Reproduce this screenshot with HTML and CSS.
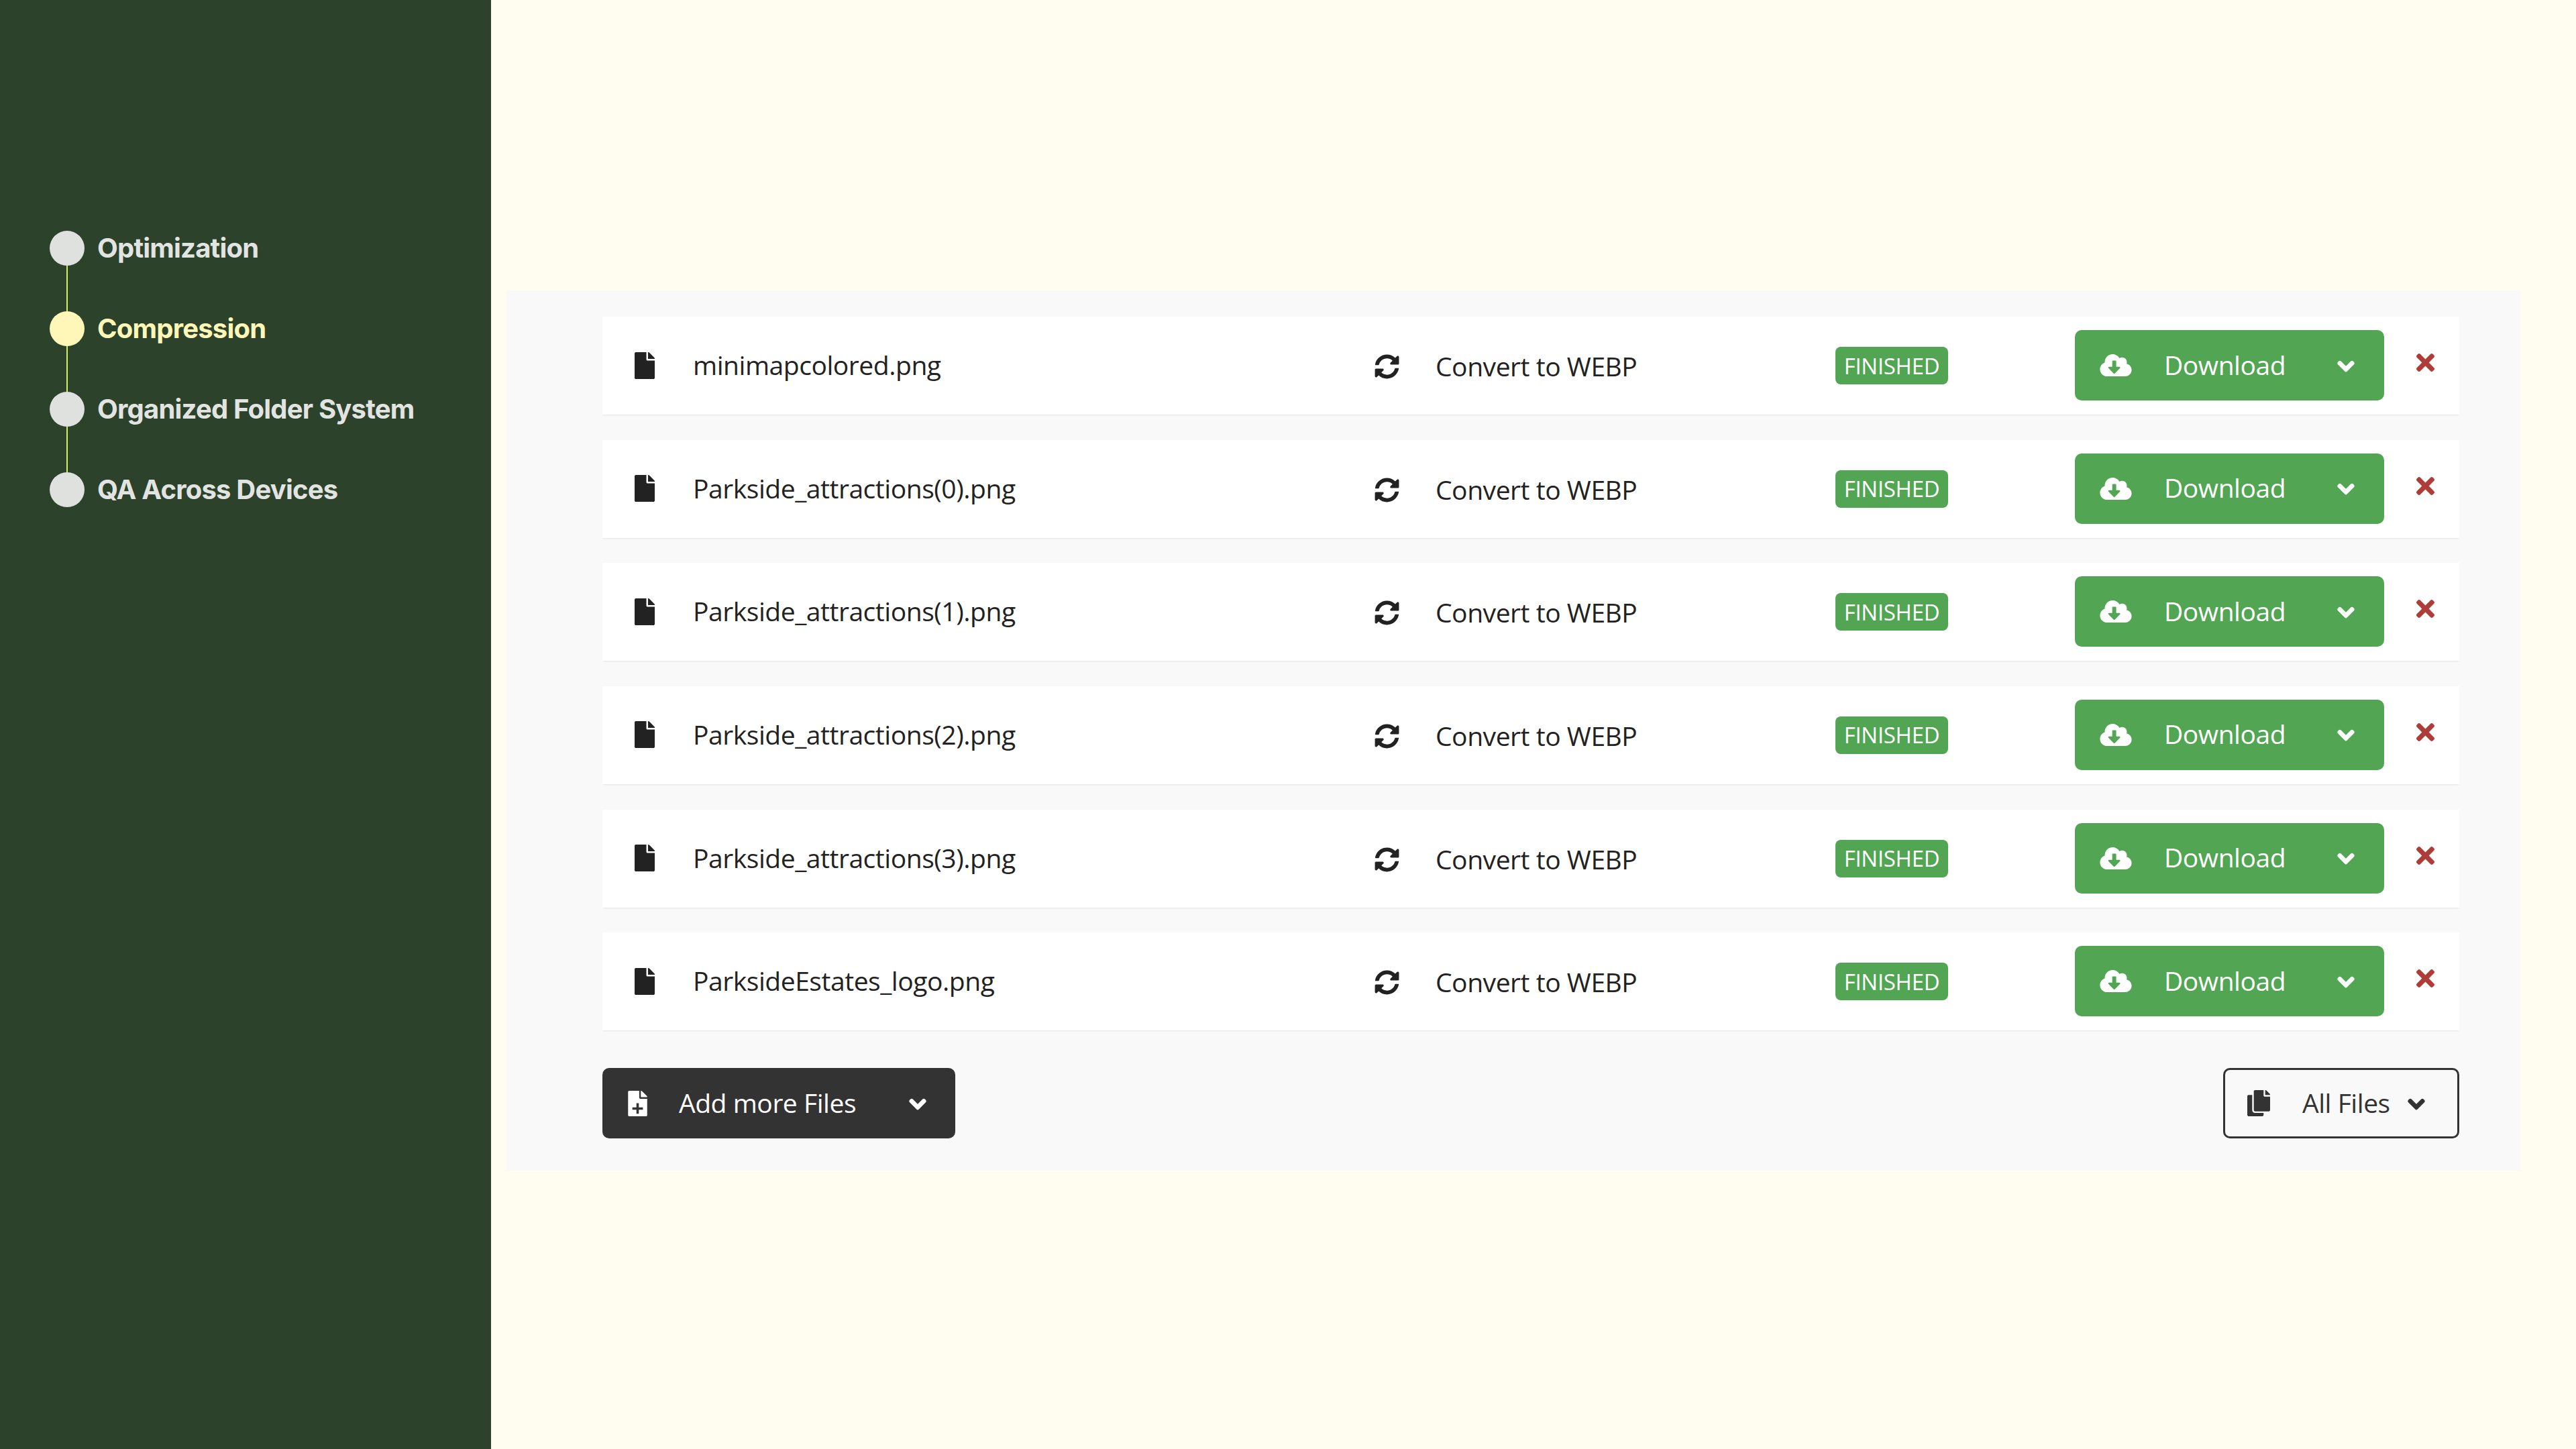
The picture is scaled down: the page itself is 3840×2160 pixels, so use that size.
FILE: index.html
```html
<!DOCTYPE html>
<html lang="en">
<head>
<meta charset="utf-8">
<title>Compression</title>
<link rel="stylesheet" href="styles.css">
</head>
<body>
<svg class="defs" width="0" height="0" aria-hidden="true">
  <symbol id="i-file" viewBox="0 0 384 512"><path d="M224 136V0H24C10.7 0 0 10.7 0 24v464c0 13.3 10.7 24 24 24h336c13.3 0 24-10.7 24-24V160H248c-13.2 0-24-10.8-24-24zm160-14.1v6.1H256V0h6.1c6.4 0 12.5 2.5 17 7l97.9 98c4.5 4.5 7 10.6 7 16.9z"/></symbol>
  <symbol id="i-file-plus" viewBox="0 0 384 512"><path fill-rule="evenodd" d="M224 136V0H24C10.7 0 0 10.7 0 24v464c0 13.3 10.7 24 24 24h336c13.3 0 24-10.7 24-24V160H248c-13.2 0-24-10.8-24-24zM168 250h48v82h82v48h-82v82h-48v-82H86v-48h82zM384 121.900v6.100H256V0h6.100c6.400 0 12.500 2.500 17 7l97.900 98c4.500 4.500 7 10.600 7 16.900z"/></symbol>
  <symbol id="i-sync" viewBox="0 0 512 512"><path d="M370.72 133.28C339.458 104.008 298.888 87.962 255.848 88c-77.458.068-144.328 53.178-162.791 126.85-1.344 5.363-6.122 9.15-11.651 9.15H24.103c-7.498 0-13.194-6.807-11.807-14.176C33.933 94.924 134.813 8 256 8c66.448 0 126.791 26.136 171.315 68.685L463.03 40.97C478.149 25.851 504 36.559 504 57.941V192c0 13.255-10.745 24-24 24H345.941c-21.382 0-32.09-25.851-16.971-40.971l41.75-41.749zM32 296h134.059c21.382 0 32.09 25.851 16.971 40.971l-41.75 41.75c31.262 29.273 71.835 45.319 114.876 45.28 77.418-.07 144.315-53.144 162.787-126.849 1.344-5.363 6.122-9.15 11.651-9.15h57.304c7.498 0 13.194 6.807 11.807 14.176C478.067 417.076 377.187 504 256 504c-66.448 0-126.791-26.136-171.315-68.685L48.97 471.03C33.851 486.149 8 475.441 8 454.059V320c0-13.255 10.745-24 24-24z"/></symbol>
  <symbol id="i-cloud" viewBox="0 32 640 448"><path d="M537.6 226.6c4.1-10.7 6.4-22.4 6.4-34.6 0-53-43-96-96-96-19.7 0-38.1 6-53.3 16.2C367 64.2 315.3 32 256 32c-88.4 0-160 71.6-160 160 0 2.7.1 5.4.2 8.1C40.2 219.8 0 273.2 0 336c0 79.5 64.5 144 144 144h368c70.7 0 128-57.3 128-128 0-61.9-44-113.6-102.4-125.4zm-132.9 88.7L299.3 420.7c-6.2 6.2-16.4 6.2-22.6 0L171.3 315.3c-10.1-10.1-2.9-27.3 11.3-27.3H248V176c0-8.8 7.2-16 16-16h48c8.8 0 16 7.2 16 16v112h65.4c14.2 0 21.4 17.2 11.3 27.3z"/></symbol>
  <symbol id="i-chevron" viewBox="-24 100 496 310"><path stroke="currentColor" stroke-width="48" stroke-linejoin="round" d="M207.029 381.476L12.686 187.132c-9.373-9.373-9.373-24.569 0-33.941l22.667-22.667c9.357-9.357 24.522-9.375 33.901-.04L224 284.505l154.745-154.021c9.379-9.335 24.544-9.317 33.901.04l22.667 22.667c9.373 9.373 9.373 24.569 0 33.941L240.971 381.476c-9.373 9.372-24.569 9.372-33.942 0z"/></symbol>
  <symbol id="i-times" viewBox="0 80 352 352"><path d="M242.72 256l100.07-100.07c12.28-12.28 12.28-32.19 0-44.48l-22.24-22.24c-12.28-12.28-32.19-12.28-44.48 0L176 189.28 75.93 89.21c-12.28-12.28-32.19-12.28-44.48 0L9.21 111.45c-12.28 12.28-12.28 32.19 0 44.48L109.28 256 9.21 356.07c-12.28 12.28-12.28 32.19 0 44.48l22.24 22.24c12.28 12.28 32.2 12.28 44.48 0L176 322.72l100.07 100.07c12.28 12.28 32.2 12.28 44.48 0l22.24-22.24c12.28-12.28 12.28-32.19 0-44.48L242.72 256z"/></symbol>
  <symbol id="i-copy" viewBox="0 0 448 512"><path d="M320 448v40c0 13.255-10.745 24-24 24H24c-13.255 0-24-10.745-24-24V120c0-13.255 10.745-24 24-24h72v296c0 30.879 25.121 56 56 56h168zm0-344V0H152c-13.255 0-24 10.745-24 24v368c0 13.255 10.745 24 24 24h272c13.255 0 24-10.745 24-24V128H344c-13.2 0-24-10.8-24-24zm120.971-31.029L375.029 7.029A24 24 0 0 0 358.059 0H352v96h96v-6.059a24 24 0 0 0-7.029-16.97z"/></symbol>
</svg>

<div class="app">
  <aside class="sidebar">
    <ol class="steps">
      <li class="step"><span class="dot"></span><span class="step-label">Optimization</span></li>
      <li class="step active"><span class="dot"></span><span class="step-label">Compression</span></li>
      <li class="step"><span class="dot"></span><span class="step-label">Organized Folder System</span></li>
      <li class="step last"><span class="dot"></span><span class="step-label">QA Across Devices</span></li>
    </ol>
  </aside>

  <main class="main">
    <section class="panel">
      <div class="row">
        <svg class="ic-file"><use href="#i-file"/></svg>
        <span class="name">minimapcolored.png</span>
        <svg class="ic-sync"><use href="#i-sync"/></svg>
        <span class="convert">Convert to WEBP</span>
        <span class="badge">FINISHED</span>
        <button class="btn-download"><svg class="ic-cloud"><use href="#i-cloud"/></svg><span class="btn-text">Download</span><svg class="ic-chev"><use href="#i-chevron"/></svg></button>
        <svg class="ic-x"><use href="#i-times"/></svg>
      </div>
      <div class="row">
        <svg class="ic-file"><use href="#i-file"/></svg>
        <span class="name">Parkside_attractions(0).png</span>
        <svg class="ic-sync"><use href="#i-sync"/></svg>
        <span class="convert">Convert to WEBP</span>
        <span class="badge">FINISHED</span>
        <button class="btn-download"><svg class="ic-cloud"><use href="#i-cloud"/></svg><span class="btn-text">Download</span><svg class="ic-chev"><use href="#i-chevron"/></svg></button>
        <svg class="ic-x"><use href="#i-times"/></svg>
      </div>
      <div class="row">
        <svg class="ic-file"><use href="#i-file"/></svg>
        <span class="name">Parkside_attractions(1).png</span>
        <svg class="ic-sync"><use href="#i-sync"/></svg>
        <span class="convert">Convert to WEBP</span>
        <span class="badge">FINISHED</span>
        <button class="btn-download"><svg class="ic-cloud"><use href="#i-cloud"/></svg><span class="btn-text">Download</span><svg class="ic-chev"><use href="#i-chevron"/></svg></button>
        <svg class="ic-x"><use href="#i-times"/></svg>
      </div>
      <div class="row">
        <svg class="ic-file"><use href="#i-file"/></svg>
        <span class="name">Parkside_attractions(2).png</span>
        <svg class="ic-sync"><use href="#i-sync"/></svg>
        <span class="convert">Convert to WEBP</span>
        <span class="badge">FINISHED</span>
        <button class="btn-download"><svg class="ic-cloud"><use href="#i-cloud"/></svg><span class="btn-text">Download</span><svg class="ic-chev"><use href="#i-chevron"/></svg></button>
        <svg class="ic-x"><use href="#i-times"/></svg>
      </div>
      <div class="row">
        <svg class="ic-file"><use href="#i-file"/></svg>
        <span class="name">Parkside_attractions(3).png</span>
        <svg class="ic-sync"><use href="#i-sync"/></svg>
        <span class="convert">Convert to WEBP</span>
        <span class="badge">FINISHED</span>
        <button class="btn-download"><svg class="ic-cloud"><use href="#i-cloud"/></svg><span class="btn-text">Download</span><svg class="ic-chev"><use href="#i-chevron"/></svg></button>
        <svg class="ic-x"><use href="#i-times"/></svg>
      </div>
      <div class="row">
        <svg class="ic-file"><use href="#i-file"/></svg>
        <span class="name">ParksideEstates_logo.png</span>
        <svg class="ic-sync"><use href="#i-sync"/></svg>
        <span class="convert">Convert to WEBP</span>
        <span class="badge">FINISHED</span>
        <button class="btn-download"><svg class="ic-cloud"><use href="#i-cloud"/></svg><span class="btn-text">Download</span><svg class="ic-chev"><use href="#i-chevron"/></svg></button>
        <svg class="ic-x"><use href="#i-times"/></svg>
      </div>
      <div class="actions">
        <button class="btn-add"><svg class="ic-plus"><use href="#i-file-plus"/></svg><span class="add-text">Add more Files</span><svg class="ic-chev"><use href="#i-chevron"/></svg></button>
        <button class="btn-all"><svg class="ic-copy"><use href="#i-copy"/></svg><span class="all-text">All Files</span><svg class="ic-chev"><use href="#i-chevron"/></svg></button>
      </div>
    </section>
  </main>
</div>
</body>
</html>
```

FILE: styles.css
```css
* { box-sizing: border-box; }
html, body { margin: 0; padding: 0; }
body { width: 3840px; height: 2160px; overflow: hidden; background: #fffcf0; font-family: "Open Sans", "Liberation Sans", sans-serif; color: #222; }
svg { fill: currentColor; display: block; flex: none; }
.defs { position: absolute; }
button { font: inherit; letter-spacing: inherit; padding: 0; cursor: pointer; }

.app { display: flex; width: 3840px; height: 2160px; }

.sidebar { width: 732px; flex: none; background: #2d422b; padding-top: 344px; padding-left: 74px; }
.steps { list-style: none; margin: 0; padding: 0; display: flex; flex-direction: column; font-family: Inter, "Liberation Sans", sans-serif; }
.step { display: flex; align-items: center; height: 52px; margin-bottom: 68px; position: relative; color: #e1e4e1; font-size: 40px; font-weight: 700; letter-spacing: -0.8px; }
.step.last { margin-bottom: 0; }
.step::after { content: ""; position: absolute; left: 25px; top: 52px; width: 2px; height: 68px; background: #d3ee62; }
.step.last::after { display: none; }
.dot { width: 52px; height: 52px; border-radius: 50%; background: #dfe1df; flex: none; }
.step-label { margin-left: 19px; margin-top: -2px; }
.step.active { color: #fff7b8; }
.step.active .dot { background: #fff7b8; }

.main { flex: 1; padding-top: 433px; padding-left: 23px; }
.panel { width: 3002px; height: 1312px; background: #f9f9f9; padding: 39px 89px 0 143px; }

.row { display: flex; align-items: center; width: 2768px; height: 146px; margin-bottom: 37.67px; background: #fff; box-shadow: 0 2px 2px -1px #e4e4e4; padding-left: 48px; font-size: 39px; letter-spacing: -0.45px; color: #222; }
.ic-file { width: 30px; height: 40px; color: #222; margin-top: -1px; }
.name { width: 1016px; margin-left: 57px; margin-top: -3px; white-space: nowrap; }
.ic-sync { width: 37px; height: 37px; color: #222; margin-top: 3px; }
.convert { width: 595px; margin-left: 54px; margin-top: 1px; white-space: nowrap; }
.badge { width: 168px; height: 56px; background: #52a552; color: #fff; border-radius: 8px; font-size: 33px; letter-spacing: -0.3px; display: flex; align-items: center; justify-content: center; margin-left: 1px; }
.btn-download { display: flex; align-items: center; width: 461px; height: 105px; margin-left: 189px; margin-top: -1px; background: #52a552; border: 0; border-radius: 10px; color: #fff; padding-left: 37px; }
.ic-cloud { width: 48px; height: 33px; }
.btn-text { width: 257px; margin-left: 48px; margin-top: -3px; margin-right: 1px; text-align: left; }
.ic-chev { width: 26px; height: 18px; margin-top: 2px; }
.ic-x { width: 27px; height: 27px; margin-left: 48px; margin-top: -9px; color: #ae3d3a; }

.actions { display: flex; justify-content: space-between; width: 2768px; margin-top: 56px; font-size: 39px; letter-spacing: -0.45px; }
.btn-add { display: flex; align-items: center; width: 526px; height: 105px; background: #333; color: #fff; border: 0; border-radius: 10px; padding-left: 38px; }
.ic-plus { width: 29px; height: 38px; }
.add-text { width: 343px; margin-left: 47px; margin-top: -2px; text-align: left; }
.btn-all { display: flex; align-items: center; width: 352px; height: 105px; background: transparent; color: #333; border: 3px solid #333; border-radius: 10px; padding-left: 33px; }
.ic-copy { width: 34px; height: 39px; }
.all-text { width: 157px; margin-left: 48px; margin-top: -2px; text-align: left; }
```
